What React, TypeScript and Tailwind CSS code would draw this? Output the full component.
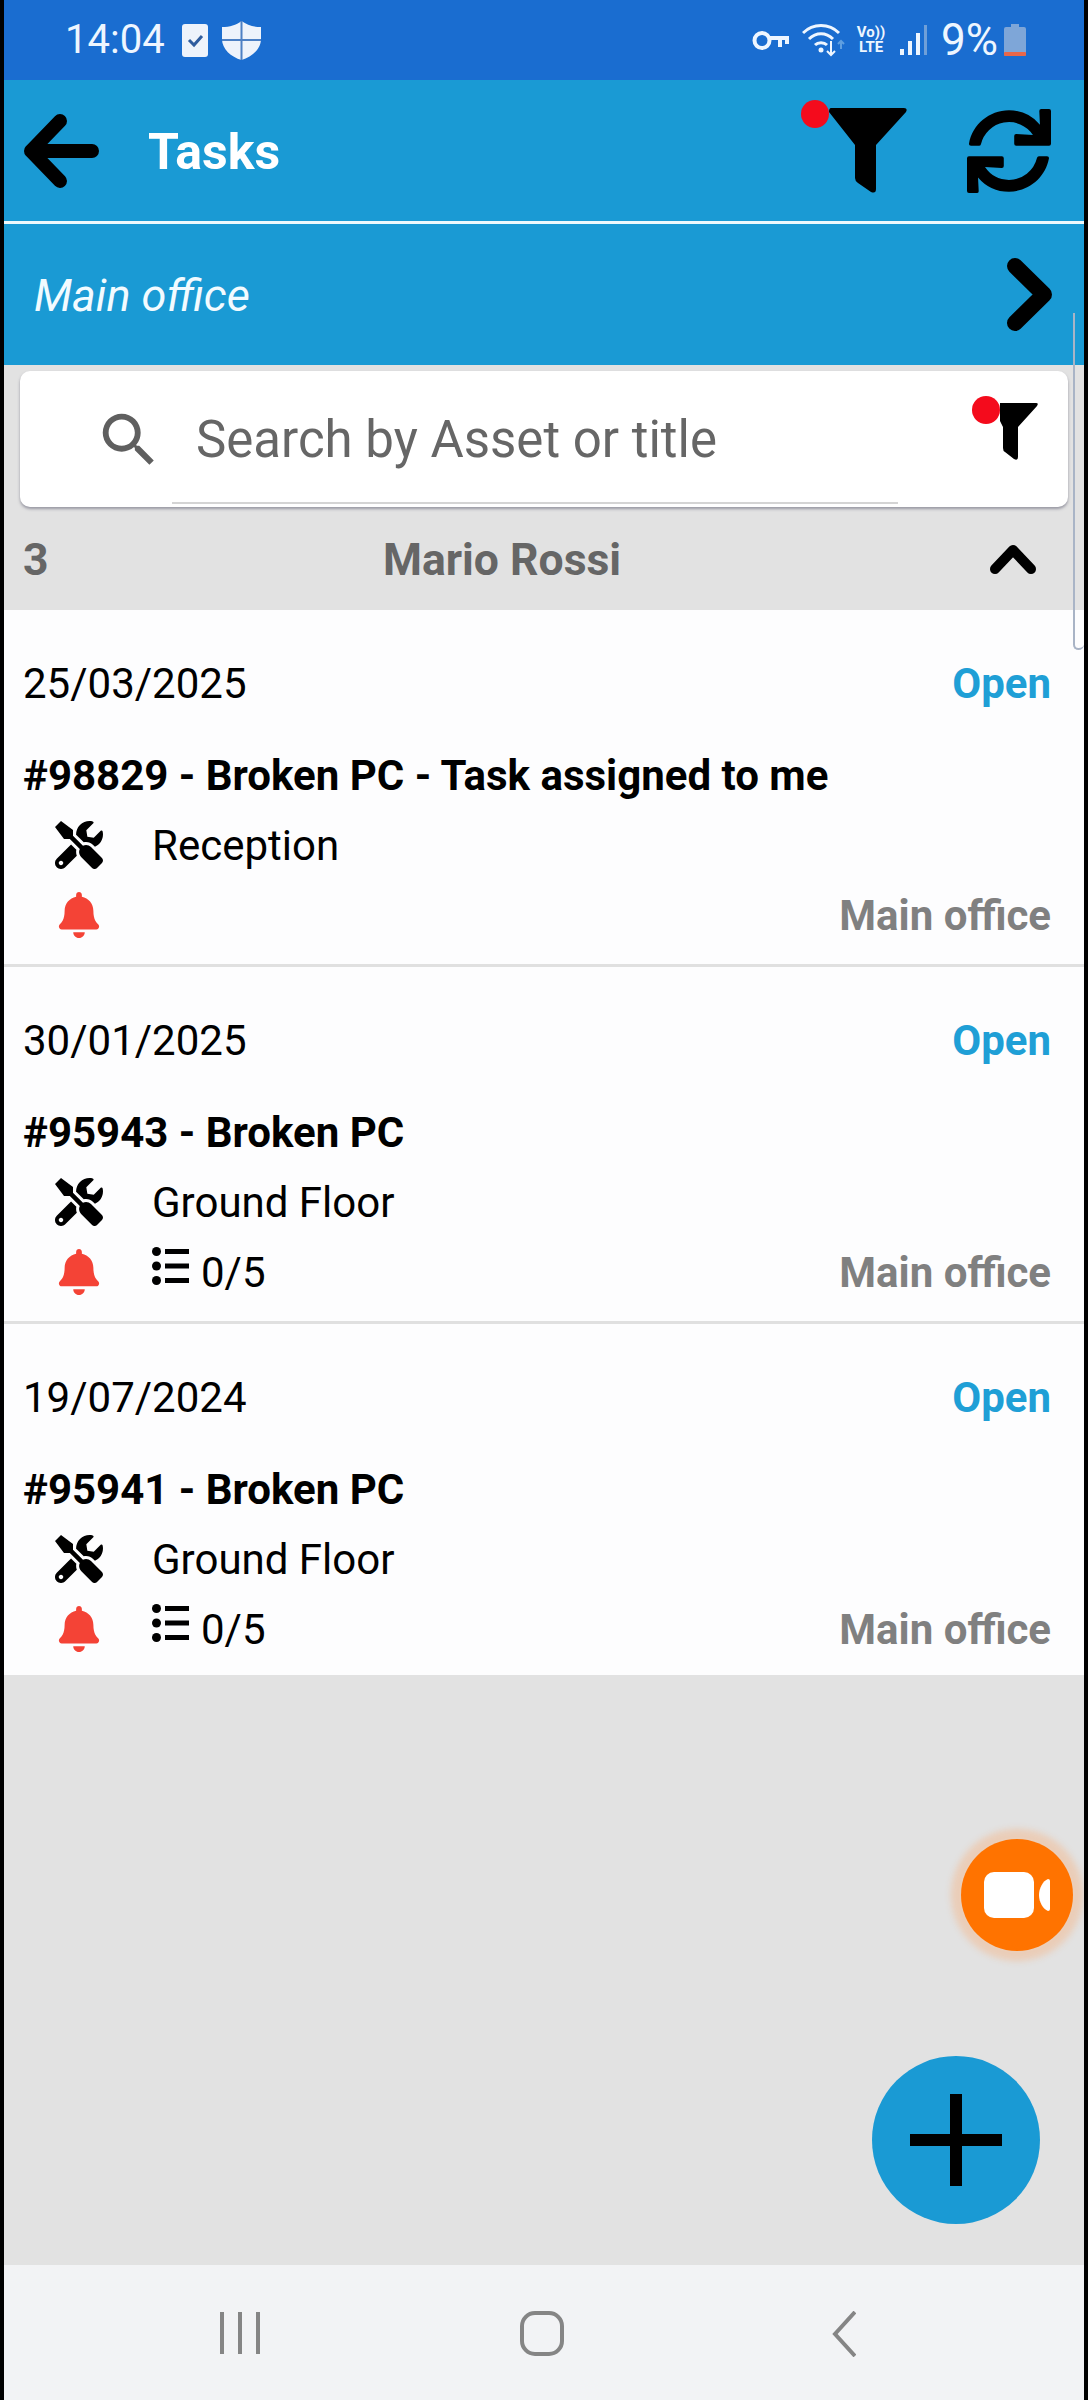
import React from 'react'
import { FaBell, FaSync, FaTools } from 'react-icons/fa'
import { MdSearch } from 'react-icons/md'

type Task = {
	date: string
	title: string
	location: string
	checklist?: string
}

const tasks: Task[] = [
	{ date: '25/03/2025', title: '#98829 - Broken PC - Task assigned to me', location: 'Reception' },
	{ date: '30/01/2025', title: '#95943 - Broken PC', location: 'Ground Floor', checklist: '0/5' },
	{ date: '19/07/2024', title: '#95941 - Broken PC', location: 'Ground Floor', checklist: '0/5' },
]

const StatusBar = () => (
	<div className="flex h-[80px] items-center bg-[#1a6dd0] text-[#eef6ff]">
		<span className="ml-[61px] text-[40px] leading-none">14:04</span>
		<svg viewBox="0 0 26 33" className="ml-[17px] h-[33px] w-[26px]">
			<rect width="26" height="33" rx="3" fill="#eef3fb" />
			<path d="M7 16l5 5 8-9" fill="none" stroke="#2f5c9e" strokeWidth="3" />
		</svg>
		<svg viewBox="0 0 39 39" className="ml-[14px] h-[39px] w-[39px]">
			<path d="M19.5 0C25 4 31 6 39 6V18C39 28 30 36 19.5 39C9 36 0 28 0 18V6C8 6 14 4 19.5 0Z" fill="#eef3fb" />
			<path d="M19.5 0V39M0 19H39" stroke="#4d80c4" strokeWidth="2" />
		</svg>
		<div className="ml-auto flex items-center">
			<svg viewBox="0 0 37 21" className="h-[21px] w-[37px]" fill="none" stroke="#eef6ff" strokeWidth="4">
				<circle cx="10" cy="10.5" r="7.5" />
				<path d="M17 8H35V14M28 8V17" />
			</svg>
			<svg viewBox="0 0 44 34" className="ml-[13px] h-[34px] w-[44px]" fill="none" stroke="#eef6ff" strokeWidth="3">
				<path d="M1 10C11 0 27 0 37 10M7 16C14 9 24 9 31 16M13 22C16 19 22 19 25 22" />
				<circle cx="19" cy="27" r="2.5" fill="#eef6ff" stroke="none" />
				<path d="M29 18V32M25 28L29 32L33 28" strokeWidth="2" />
				<path d="M39 26V18M36 21L39 18L42 21" stroke="#5f9fe0" strokeWidth="2" />
			</svg>
			<div className="ml-[10px] flex w-[30px] flex-col items-center text-[15px] font-bold leading-[15px]">
				<span>Vo))</span>
				<span>LTE</span>
			</div>
			<svg viewBox="0 0 27 30" className="ml-[14px] h-[30px] w-[27px]">
				<rect x="0" y="24" width="4" height="6" fill="#eef6ff" />
				<rect x="8" y="16" width="4" height="14" fill="#eef6ff" />
				<rect x="16" y="8" width="4" height="22" fill="#eef6ff" />
				<rect x="24" y="0" width="3" height="30" fill="#6f9fd8" />
			</svg>
			<span className="ml-[14px] text-[44px] leading-none">9%</span>
			<svg viewBox="0 0 22 32" className="ml-[6px] mr-[58px] h-[32px] w-[22px]">
				<path d="M7 0H15V3H20Q22 3 22 5V30Q22 32 20 32H2Q0 32 0 30V5Q0 3 2 3H7Z" fill="#7ea6d8" />
				<rect y="28" width="22" height="4" rx="1" fill="#e8674a" />
			</svg>
		</div>
	</div>
)

const Toolbar = () => (
	<div className="flex h-[144px] items-center border-b-[3px] border-[#eef9fd] bg-[#1a9ad4]">
		<svg viewBox="0 0 76 74" className="ml-[19px] h-[74px] w-[76px]" fill="none" stroke="black" strokeWidth="14" strokeLinecap="round" strokeLinejoin="round">
			<path d="M69 37H8M37 7L8 37L37 67" />
		</svg>
		<span className="ml-[49px] mt-[2px] text-[50px] font-bold leading-none text-white">Tasks</span>
		<div className="relative ml-auto h-[85px] w-[78px]">
			<svg viewBox="0 0 78 85" className="h-[85px] w-[78px] text-black" fill="currentColor">
				<path d="M2 0H75Q79 0 77 4L47 37V81Q47 86 42 84L29 75Q26 73 26 70V37L0 4Q0 0 2 0Z" />
			</svg>
			<span className="absolute left-[-28px] top-[-8px] h-[28px] w-[28px] rounded-full bg-[#f40b1c]" />
		</div>
		<FaSync className="ml-[60px] mr-[33px] text-[84px] text-black" />
	</div>
)

const LocationBar = () => (
	<div className="flex h-[141px] items-center justify-between bg-[#1a9ad4]">
		<span className="ml-[30px] mt-[2px] text-[45px] italic leading-none text-[#f2fbff]">Main office</span>
		<svg viewBox="0 0 47 75" className="mr-[31px] h-[75px] w-[47px]" fill="none" stroke="black" strokeWidth="16" strokeLinecap="round" strokeLinejoin="round">
			<path d="M9 9L38 37.5L9 66" />
		</svg>
	</div>
)

const SearchCard = () => (
	<div className="mx-[16px] mt-[6px] flex h-[136px] items-start rounded-[10px] bg-white shadow-[0_2px_3px_rgba(90,90,110,0.55)]">
		<MdSearch className="ml-[74px] mt-[34px] text-[70px] text-[#5f5f5f]" />
		<div className="ml-[8px] flex h-[133px] w-[726px] items-center border-b-2 border-[#d4d4d4] pt-[5px]">
			<span className="ml-[24px] text-[51px] leading-none text-[#666666]">Search by Asset or title</span>
		</div>
		<div className="relative ml-[102px] mt-[32px] h-[57px] w-[38px]">
			<svg viewBox="0 0 38 57" className="h-[57px] w-[38px] text-black" fill="currentColor">
				<path d="M0 0H36Q39 0 37 3L18 24V54Q18 58 14 56L5 49Q3 48 3 45V24L0 18Z" />
			</svg>
			<span className="absolute left-[-28px] top-[-7px] h-[28px] w-[28px] rounded-full bg-[#f40b1c]" />
		</div>
	</div>
)

const ChecklistIcon = () => (
	<svg viewBox="0 0 37 38" className="mt-[-14px] h-[38px] w-[37px]" fill="black">
		<circle cx="4.5" cy="4.5" r="4.5" />
		<circle cx="4.5" cy="19" r="4.5" />
		<circle cx="4.5" cy="33.5" r="4.5" />
		<rect x="13" y="2" width="24" height="5" />
		<rect x="13" y="16.5" width="24" height="5" />
		<rect x="13" y="31" width="24" height="5" />
	</svg>
)

const TaskCard = ({ task, last }: { task: Task; last: boolean }) => (
	<div className={`flex flex-col bg-[#fdfdfe] pl-[19px] pr-[33px] pt-[44px] text-black ${last ? 'h-[351px]' : 'h-[357px] border-b-[3px] border-[#e0e0e0]'}`}>
		<div className="flex h-[60px] items-center justify-between text-[42px] leading-none">
			<span>{task.date}</span>
			<span className="font-bold text-[#1f9fd6]">Open</span>
		</div>
		<div className="mt-[32px] flex h-[60px] items-center text-[42px] font-bold leading-none">{task.title}</div>
		<div className="mt-[10px] flex h-[60px] items-center text-[42px] leading-none">
			<div className="w-[129px] pl-[32px]">
				<FaTools className="mt-[-2px] text-[48px]" />
			</div>
			<span>{task.location}</span>
		</div>
		<div className="mt-[10px] flex h-[60px] items-center text-[42px] leading-none">
			<div className="w-[129px] pl-[33px]">
				<FaBell className="mt-[-2px] text-[46px] text-[#f44336]" />
			</div>
			{task.checklist && (
				<div className="flex items-center">
					<ChecklistIcon />
					<span className="ml-[12px]">{task.checklist}</span>
				</div>
			)}
			<span className="ml-auto font-bold text-[#808080]">Main office</span>
		</div>
	</div>
)

const NavBar = () => (
	<div className="flex h-[135px] items-start bg-[#f2f3f5] pt-[46px]">
		<svg viewBox="0 0 40 44" className="ml-[216px] h-[44px] w-[40px]" stroke="#858585" strokeWidth="4">
			<path d="M2 1V43M20 1V43M38 1V43" />
		</svg>
		<svg viewBox="0 0 44 45" className="ml-[260px] h-[45px] w-[44px]" fill="none" stroke="#858585" strokeWidth="4">
			<rect x="2" y="2" width="40" height="41" rx="13" />
		</svg>
		<svg viewBox="0 0 24 46" className="ml-[268px] h-[46px] w-[24px]" fill="none" stroke="#858585" strokeWidth="4">
			<path d="M23 1L3 23L23 45" />
		</svg>
	</div>
)

const App = () => {
	return (
		<div className="relative flex h-[2400px] w-[1088px] flex-col overflow-hidden border-x-4 border-black bg-[#e2e2e2] font-['Roboto',sans-serif]">
			<StatusBar />
			<Toolbar />
			<LocationBar />
			<SearchCard />
			<div className="flex h-[103px] items-center pt-[3px] text-[44.5px] font-bold leading-none text-[#666666]">
				<span className="w-[379px] pl-[19px]">3</span>
				<span>Mario Rossi</span>
				<svg viewBox="0 0 46 30" className="ml-auto mr-[48px] mt-[-3px] h-[30px] w-[46px]" fill="none" stroke="black" strokeWidth="10" strokeLinecap="round" strokeLinejoin="round">
					<path d="M5 25L23 6L41 25" />
				</svg>
			</div>
			{tasks.map((task, i) => (
				<TaskCard key={task.title} task={task} last={i === tasks.length - 1} />
			))}
			<div className="flex-1" />
			<NavBar />

			{/* scroll track + floating buttons */}
			<div className="absolute left-[1069px] top-[313px] h-[337px] w-[11px] rounded-b-[8px] border-l-2 border-b-2 border-[#a9b4c6]" />
			<div className="absolute left-[957px] top-[1839px] flex h-[112px] w-[112px] items-center justify-center rounded-full bg-[#ff7300] shadow-[0_0_6px_10px_rgba(255,160,90,0.3)]">
				<svg viewBox="0 0 66 46" className="h-[46px] w-[66px]" fill="white">
					<rect width="50" height="46" rx="10" />
					<path d="M55 23C55 16 59 9 64 7Q66 7 66 9V37Q66 39 64 39C59 37 55 30 55 23Z" />
				</svg>
			</div>
			<div className="absolute left-[868px] top-[2056px] flex h-[168px] w-[168px] items-center justify-center rounded-full bg-[#1a9ad4]">
				<svg viewBox="0 0 92 92" className="h-[92px] w-[92px]" fill="black">
					<path d="M40 0H52V40H92V52H52V92H40V52H0V40H40Z" />
				</svg>
			</div>
		</div>
	)
}

export default App
